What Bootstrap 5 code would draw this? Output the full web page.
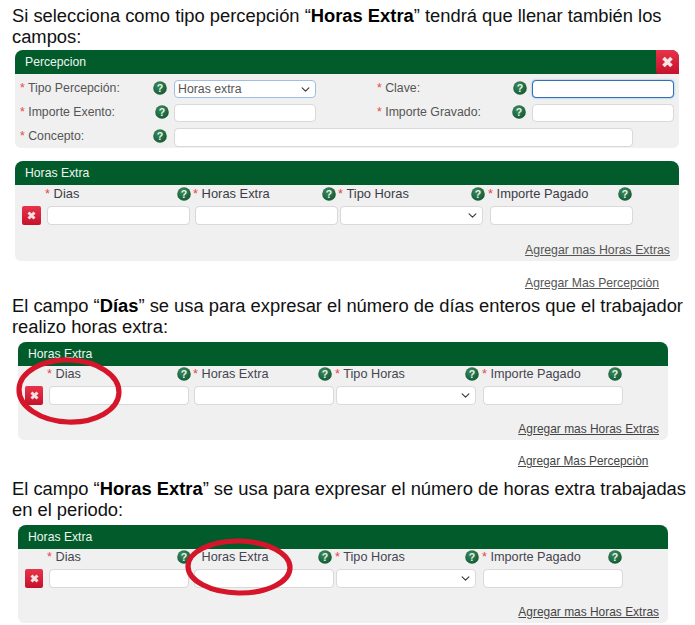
<!DOCTYPE html>
<html lang="es">
<head>
<meta charset="utf-8">
<title>Horas Extra</title>
<link rel="stylesheet" href="https://cdn.jsdelivr.net/npm/bootstrap@5.3.0/dist/css/bootstrap.min.css">
<style>
html,body{background:#fff;}
body{font-family:"Liberation Sans",Arial,sans-serif;color:#333;margin:0;width:695px;height:625px;overflow:hidden;}
.doc-text{font-size:18.35px;line-height:21px;color:#111;margin:0 0 0 12px;width:676px;height:42px;}
.doc-text b{font-weight:700;color:#000;}
.t1{margin-top:5px;margin-bottom:3px;}
.t2{margin-top:5px;margin-bottom:5px;}
.t3{margin-top:10px;margin-bottom:5px;}
.panel{background:#f0f0f0;border-radius:8px 8px 6px 6px;font-size:12.3px;position:relative;}
.p1{margin-left:15px;width:664px;height:98px;}
.p2{margin-left:15px;width:664px;height:100px;margin-top:13px;}
.p3{margin-left:18px;width:650px;height:98px;}
.phead{background:#025b2b;color:#eef6ef;font-size:12.2px;line-height:24px;height:24px;border-radius:8px 8px 0 0;padding-left:10px;position:relative;}
.closer{width:23px;height:24px;background:linear-gradient(#e8344a,#c5122c);border-radius:0 7px 0 3px;position:absolute;right:0;top:0;}
.closer svg{position:absolute;left:6px;top:6px;}
.f1{padding-top:6px;grid-template-columns:5px 154px 142px 61px 155px 142px;grid-auto-rows:24px;}
.lab{color:#555;line-height:14px;white-space:nowrap;padding-top:1px;}
.rq{color:#e4483f;}
.fld.form-control,.fld.form-select{height:18px;min-height:0;border:1px solid #d9d9d9;border-radius:4px;background-color:#fff;padding:0 3px;font-size:12.3px;line-height:15px;color:#555;box-shadow:none;font-family:inherit;}
.fld.form-select{background-position:right 4px center;background-size:11px 9px;}
.fld.blue.form-select{border-color:#9fbfe0;}
.fld.focus.form-control{border-color:#2e72b8;box-shadow:0 0 2px #6ea4d8;}
.fld.con{grid-column:span 4;width:459px;height:19px;}
.help{width:14px;height:14px;flex:none;display:block;}
.mr5{margin-right:5px}.mr6{margin-right:6px}.mr7{margin-right:7px}.mr2{margin-right:2px}.mr3{margin-right:3px}
.hs2{grid-template-columns:30px 148px 145px 150px 146px;height:21px;padding-top:2px;}
.hs2 .hcell{font-size:12.9px;color:#3c3c46;}
.is2{grid-template-columns:32px 148px 145px 150px 143px;}
.hs3{grid-template-columns:29px 146px 142px 147px 143px;height:20px;padding-top:1px;}
.is3{grid-template-columns:31px 145px 142px 147px 140px;}
.hcell{color:#45454f;font-size:12.7px;line-height:14px;white-space:nowrap;}
.nost{visibility:hidden;}
.is2 .fld.form-control,.is2 .fld.form-select{width:143px;height:19px;}
.is3 .fld.form-control,.is3 .fld.form-select{width:140px;height:19px;}
.del{width:19px;height:19px;background:linear-gradient(#e8344a,#c5122c);border-radius:2px;margin-left:7px;position:relative;}
.is3 .del{width:18px;margin-left:7px;}
.del svg{position:absolute;left:5px;top:5px;}
.aglink{color:#555;font-size:12.3px;text-decoration:underline;line-height:14px;white-space:nowrap;display:block;}
.l2{padding-right:9px;margin-top:18px;}
.l3{padding-right:9px;margin-top:17px;font-size:11.95px;color:#444;}
.o2{margin:15px 0 0 525px;font-size:12.2px;}
.o3{margin:14px 0 0 518px;font-size:11.85px;color:#444;}
.ring{position:absolute;pointer-events:none;z-index:3;overflow:visible;}
.r1{left:-2px;top:15px;}
.r2{left:167px;top:13px;}
</style>
</head>
<body>
<svg width="0" height="0" class="position-absolute"><defs>
<radialGradient id="qg" cx="40%" cy="30%" r="80%"><stop offset="0" stop-color="#3d8a5c"/><stop offset="1" stop-color="#0d5530"/></radialGradient>
<g id="qm"><circle cx="7" cy="7" r="6.800" fill="url(#qg)"/><text x="7" y="11" text-anchor="middle" font-family="Liberation Sans" font-weight="700" font-size="10.500" fill="#e8f2ea">?</text></g>
<g id="xm"><path d="M1.500 1.500 7.500 7.500M7.500 1.500 1.500 7.500" stroke="#f5dfe1" stroke-width="3" fill="none"/></g>
</defs></svg>

<p class="doc-text t1">Si selecciona como tipo percepción “<b>Horas Extra</b>” tendrá que llenar también los campos:</p>

<div class="panel p1">
  <div class="phead">Percepcion<span class="closer"><svg width="11" height="12" viewBox="0 0 11 12"><path d="M1.500 2 9.500 10M9.500 2 1.500 10" stroke="#f6e6e6" stroke-width="3.600" fill="none"/></svg></span></div>
  <div class="d-grid f1">
    <span></span><div class="lab d-flex justify-content-between"><span><span class="rq">*</span> Tipo Percepción:</span><svg class="help mr7" viewBox="0 0 14 14"><use href="#qm"/></svg></div>
    <select class="fld blue form-select"><option>Horas extra</option></select>
    <span></span><div class="lab d-flex justify-content-between"><span><span class="rq">*</span> Clave:</span><svg class="help mr5" viewBox="0 0 14 14"><use href="#qm"/></svg></div>
    <input class="fld focus form-control">

    <span></span><div class="lab d-flex justify-content-between"><span><span class="rq">*</span> Importe Exento:</span><svg class="help mr5" viewBox="0 0 14 14"><use href="#qm"/></svg></div>
    <input class="fld form-control">
    <span></span><div class="lab d-flex justify-content-between"><span><span class="rq">*</span> Importe Gravado:</span><svg class="help mr6" viewBox="0 0 14 14"><use href="#qm"/></svg></div>
    <input class="fld form-control">

    <span></span><div class="lab d-flex justify-content-between"><span><span class="rq">*</span> Concepto:</span><svg class="help mr7" viewBox="0 0 14 14"><use href="#qm"/></svg></div>
    <input class="fld con form-control">
  </div>
</div>

<div class="panel p2">
  <div class="phead">Horas Extra</div>
  <div class="d-grid hs2">
    <span></span>
    <div class="hcell d-flex justify-content-between"><span><span class="rq">*</span> Dias</span><svg class="help mr2" viewBox="0 0 14 14"><use href="#qm"/></svg></div>
    <div class="hcell d-flex justify-content-between"><span><span class="rq">*</span> Horas Extra</span><svg class="help mr2" viewBox="0 0 14 14"><use href="#qm"/></svg></div>
    <div class="hcell d-flex justify-content-between"><span><span class="rq">*</span> Tipo Horas</span><svg class="help mr3" viewBox="0 0 14 14"><use href="#qm"/></svg></div>
    <div class="hcell d-flex justify-content-between"><span><span class="rq">*</span> Importe Pagado</span><svg class="help mr2" viewBox="0 0 14 14"><use href="#qm"/></svg></div>
  </div>
  <div class="d-grid is2">
    <div><div class="del"><svg width="9" height="9" viewBox="0 0 9 9"><use href="#xm"/></svg></div></div>
    <input class="fld form-control"><input class="fld form-control"><select class="fld form-select"><option></option></select><input class="fld form-control">
  </div>
  <a class="aglink l2 text-end" href="#">Agregar mas Horas Extras</a>
</div>
<a class="aglink o2" href="#">Agregar Mas Percepciòn</a>

<p class="doc-text t2">El campo “<b>Días</b>” se usa para expresar el número de días enteros que el trabajador realizo horas extra:</p>

<div class="panel p3">
  <div class="phead">Horas Extra</div>
  <div class="d-grid hs3">
    <span></span>
    <div class="hcell d-flex justify-content-between"><span><span class="rq">*</span> Dias</span><svg class="help mr2" viewBox="0 0 14 14"><use href="#qm"/></svg></div>
    <div class="hcell d-flex justify-content-between"><span><span class="rq">*</span> Horas Extra</span><svg class="help mr3" viewBox="0 0 14 14"><use href="#qm"/></svg></div>
    <div class="hcell d-flex justify-content-between"><span><span class="rq">*</span> Tipo Horas</span><svg class="help mr3" viewBox="0 0 14 14"><use href="#qm"/></svg></div>
    <div class="hcell d-flex justify-content-between"><span><span class="rq">*</span> Importe Pagado</span><svg class="help mr3" viewBox="0 0 14 14"><use href="#qm"/></svg></div>
  </div>
  <div class="d-grid is3">
    <div><div class="del"><svg width="9" height="9" viewBox="0 0 9 9"><use href="#xm"/></svg></div></div>
    <input class="fld form-control"><input class="fld form-control"><select class="fld form-select"><option></option></select><input class="fld form-control">
  </div>
  <a class="aglink l3 text-end" href="#">Agregar mas Horas Extras</a>
  <svg class="ring r1" width="106" height="68" viewBox="0 0 106 68"><ellipse cx="53" cy="34" rx="50" ry="31" fill="none" stroke="#d5162a" stroke-width="5.200" transform="rotate(2 53 34)"/></svg>
</div>
<a class="aglink o3" href="#">Agregar Mas Percepciòn</a>

<p class="doc-text t3">El campo “<b>Horas Extra</b>” se usa para expresar el número de horas extra trabajadas en el periodo:</p>

<div class="panel p3">
  <div class="phead">Horas Extra</div>
  <div class="d-grid hs3">
    <span></span>
    <div class="hcell d-flex justify-content-between"><span><span class="rq">*</span> Dias</span><svg class="help mr2" viewBox="0 0 14 14"><use href="#qm"/></svg></div>
    <div class="hcell d-flex justify-content-between"><span><span class="rq nost">*</span> Horas Extra</span><svg class="help mr3" viewBox="0 0 14 14"><use href="#qm"/></svg></div>
    <div class="hcell d-flex justify-content-between"><span><span class="rq">*</span> Tipo Horas</span><svg class="help mr3" viewBox="0 0 14 14"><use href="#qm"/></svg></div>
    <div class="hcell d-flex justify-content-between"><span><span class="rq">*</span> Importe Pagado</span><svg class="help mr3" viewBox="0 0 14 14"><use href="#qm"/></svg></div>
  </div>
  <div class="d-grid is3">
    <div><div class="del"><svg width="9" height="9" viewBox="0 0 9 9"><use href="#xm"/></svg></div></div>
    <input class="fld form-control"><input class="fld form-control"><select class="fld form-select"><option></option></select><input class="fld form-control">
  </div>
  <a class="aglink l3 text-end" href="#">Agregar mas Horas Extras</a>
  <svg class="ring r2" width="108" height="58" viewBox="0 0 108 58"><ellipse cx="54" cy="29" rx="51" ry="26" fill="none" stroke="#d5162a" stroke-width="5.200" transform="rotate(1 54 29)"/></svg>
</div>
</body>
</html>
